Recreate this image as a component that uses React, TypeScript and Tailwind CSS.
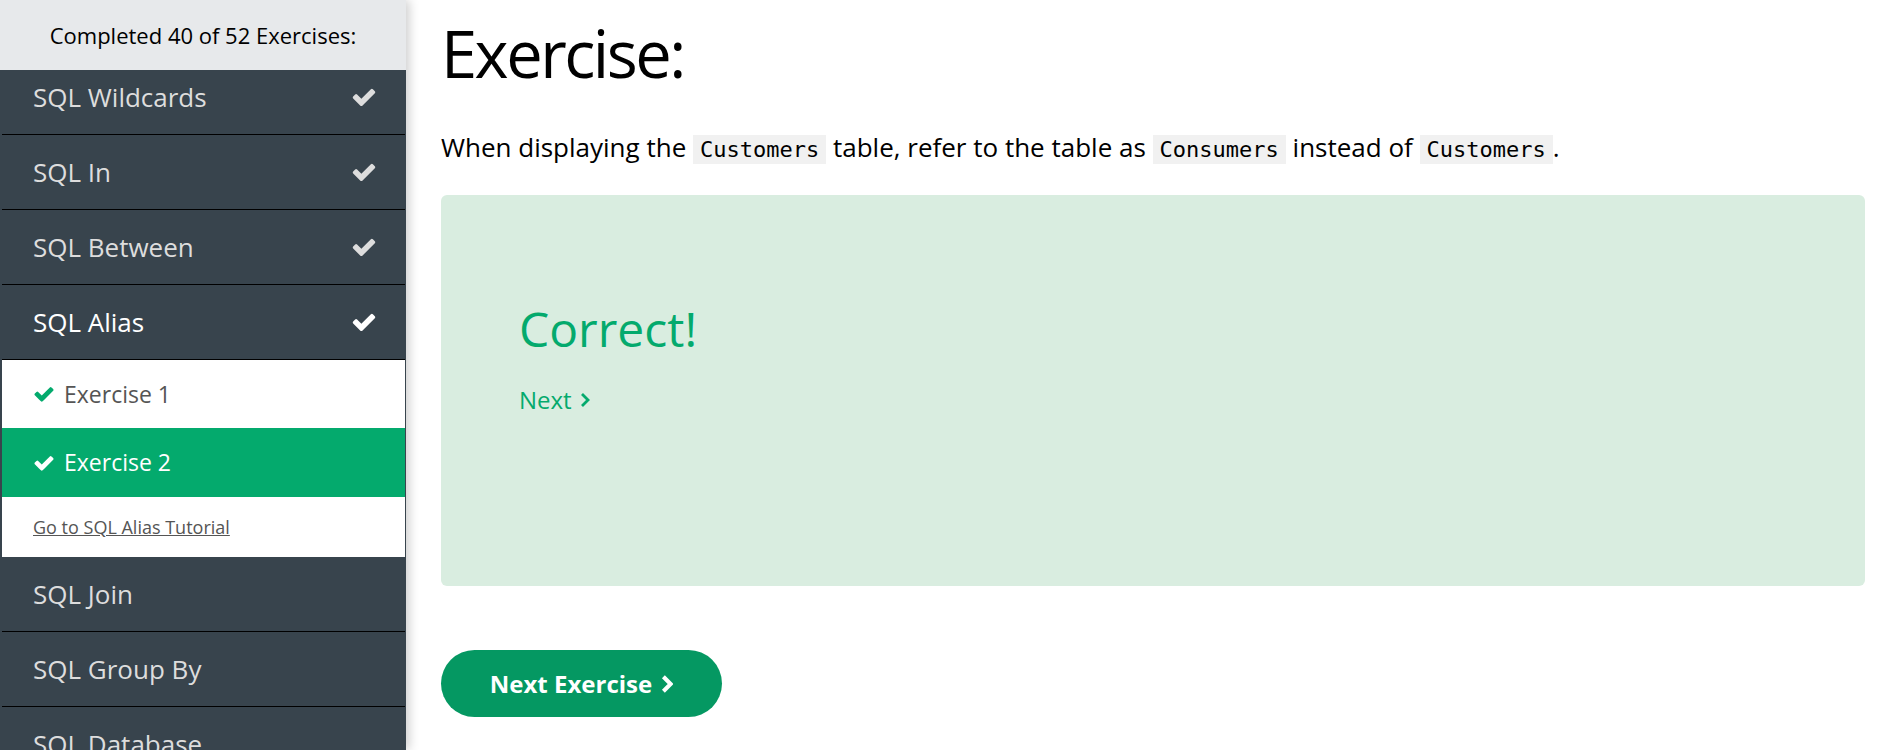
const CheckIcon = ({ className }: { className?: string }) => (
  <svg viewBox="0 0 1792 1792" className={className} fill="currentColor" aria-hidden="true">
    <path d="M1671 566q0 40-28 68l-724 724-136 136q-28 28-68 28t-68-28l-136-136-362-362q-28-28-28-68t28-68l136-136q28-28 68-28t68 28l294 295 656-657q28-28 68-28t68 28l136 136q28 28 28 68z" />
  </svg>
);

const before = ['SQL Wildcards', 'SQL In', 'SQL Between'];
const after = ['SQL Join', 'SQL Group By', 'SQL Database'];

const mono = { fontFamily: '"DejaVu Sans Mono", monospace' };

function Chapter({ title, done, active }: { title: string; done?: boolean; active?: boolean }) {
  return (
    <div className="h-[75px] shrink-0 border-b border-black flex items-center justify-between pl-[31px] pr-[28px]">
      <span className={`text-[26px] ${active ? 'text-white' : 'text-[#dddddd]'}`}>{title}</span>
      {done && <CheckIcon className={`w-[26px] h-[26px] ${active ? 'text-white' : 'text-[#dddddd]'}`} />}
    </div>
  );
}

export default function App() {
  return (
    <div
      className="flex w-[1883px] h-[750px] overflow-hidden bg-white"
      style={{ fontFamily: '"Open Sans", sans-serif' }}
    >
      {/* Sidebar */}
      <aside className="relative z-10 w-[406px] h-[750px] shrink-0 flex flex-col bg-[#38444d] shadow-[3px_0_10px_rgba(0,0,0,0.2)]">
        <div className="relative z-10 h-[70px] shrink-0 bg-[#e7e9eb] flex items-center justify-center text-[22px] text-black">
          Completed 40 of 52 Exercises:
        </div>
        <div className="flex-1 overflow-hidden">
          <div className="-mt-[10px] flex flex-col pl-[2px] pr-[1px]">
            {before.map(t => (
              <Chapter key={t} title={t} done />
            ))}
            <Chapter title="SQL Alias" done active />

            {/* Open chapter */}
            <div className="bg-white flex flex-col">
              <div className="h-[68px] flex items-center gap-[9px] pl-[31px] text-[23px] text-[#555555]">
                <CheckIcon className="w-[22px] h-[22px] text-[#04aa6d]" />
                Exercise 1
              </div>
              <div className="h-[69px] flex items-center gap-[9px] pl-[31px] text-[23px] text-white bg-[#04aa6d]">
                <CheckIcon className="w-[22px] h-[22px] text-white" />
                Exercise 2
              </div>
              <div className="h-[60px] flex items-center pl-[31px]">
                <a href="#" className="text-[18px] text-[#555555] underline">
                  Go to SQL Alias Tutorial
                </a>
              </div>
            </div>

            {after.map(t => (
              <Chapter key={t} title={t} />
            ))}
          </div>
        </div>
      </aside>

      {/* Main */}
      <main className="flex-1 pl-[35px] pr-[18px]">
        <h1 className="mt-[21px] text-[65px] leading-none font-normal tracking-[-2.5px] text-black">Exercise:</h1>

        <p className="mt-[44px] text-[26px] leading-[34px] text-black">
          When displaying the{' '}
          <code className="bg-[#f1f1f1] px-[7px] py-[2px] text-[22px]" style={mono}>Customers</code>{' '}
          table, refer to the table as{' '}
          <code className="bg-[#f1f1f1] px-[7px] py-[2px] text-[22px]" style={mono}>Consumers</code>{' '}
          instead of{' '}
          <code className="bg-[#f1f1f1] px-[7px] py-[2px] text-[22px]" style={mono}>Customers</code>.
        </p>

        <div className="mt-[28px] h-[391px] rounded-[6px] bg-[#d9ede0] pl-[78px] pt-[110px]">
          <h2 className="text-[48px] leading-none text-[#04aa6d]">Correct!</h2>
          <a href="#" className="mt-[29px] inline-flex items-center gap-[8px] text-[24px] text-[#04aa6d]">
            Next
            <svg viewBox="0 0 10 16" className="w-[10px] h-[16px]" fill="none" stroke="currentColor" strokeWidth="2.8">
              <path d="M2 2l6 6-6 6" />
            </svg>
          </a>
        </div>

        <button className="mt-[64px] w-[281px] h-[67px] rounded-full bg-[#059862] text-white text-[24px] font-bold flex items-center justify-center gap-[9px]">
          Next Exercise
          <svg viewBox="0 0 10 16" className="w-[12px] h-[20px]" fill="none" stroke="currentColor" strokeWidth="3.4">
            <path d="M2 2l6 6-6 6" />
          </svg>
        </button>
      </main>
    </div>
  );
}
